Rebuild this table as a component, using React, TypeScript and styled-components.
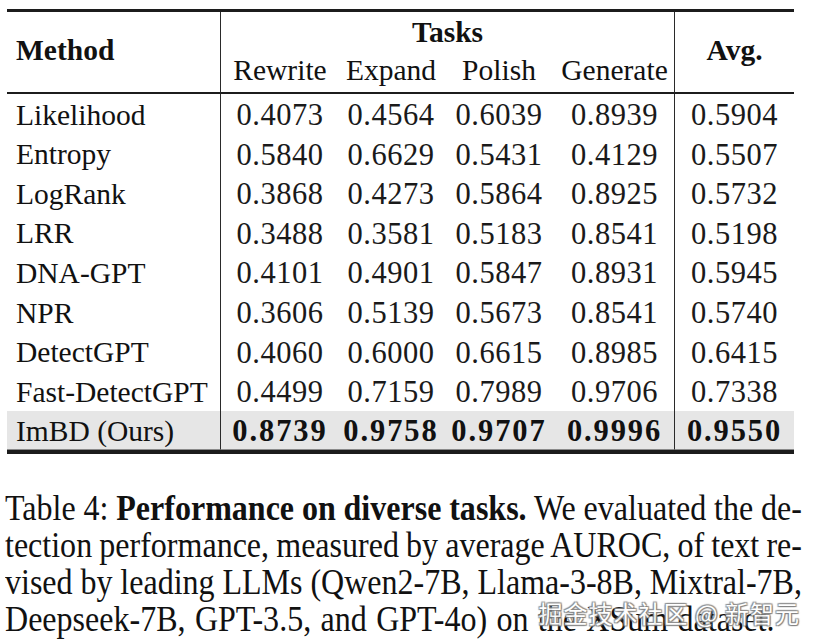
import * as React from "react"
import styled, { createGlobalStyle } from "styled-components"

const GlobalStyle = createGlobalStyle`
  html, body {
    margin: 0;
    padding: 0;
    background: #ffffff;
  }
  body {
    font-family: "Liberation Serif", "Times New Roman", serif;
    color: #111111;
  }
`

const Page = styled.div`
  width: 816px;
  height: 641px;
  overflow: hidden;
  padding: 9px 0 0 7px;
  box-sizing: border-box;
`

const Table = styled.table`
  width: 787px;
  table-layout: fixed;
  border-collapse: separate;
  border-spacing: 0;
  border-top: 3px solid #1c1c1c;
  border-bottom: 4px solid #1c1c1c;
  font-size: 29.5px;
`

const HeadRow = styled.tr`
  height: 41px;
`

const HeadCell = styled.th<{ $left?: boolean; $rule?: boolean; $bold?: boolean }>`
  padding: 0 0 0 ${(p) => (p.$left ? "9px" : "0")};
  text-align: ${(p) => (p.$left ? "left" : "center")};
  vertical-align: middle;
  font-weight: ${(p) => (p.$bold ? 700 : 400)};
  white-space: nowrap;
  border-right: ${(p) => (p.$rule ? "1.5px solid #2a2a2a" : "none")};
  line-height: 1;
`

const SubHead = styled(HeadCell)`
  border-bottom: 2px solid #1c1c1c;
  padding-bottom: 3px;
`

const SpanHead = styled(HeadCell)`
  border-bottom: 2px solid #1c1c1c;
  padding-bottom: 2px;
`

const BodyRow = styled.tr<{ $ours?: boolean }>`
  height: 39.6px;
  background: ${(p) => (p.$ours ? "#e6e6e6" : "transparent")};
`

const NameCell = styled.td<{ $last?: boolean }>`
  padding: 3px 0 0 9px;
  white-space: nowrap;
  border-right: 1.5px solid #2a2a2a;
  line-height: 1;
  border-bottom: ${(p) => (p.$last ? "1px solid #8a8a8a" : "none")};
`

const NumCell = styled.td<{ $bold?: boolean; $rule?: boolean; $last?: boolean }>`
  padding: 3px 0 0 0;
  text-align: center;
  white-space: nowrap;
  font-size: 30.5px;
  line-height: 1;
  font-weight: ${(p) => (p.$bold ? 700 : 400)};
  letter-spacing: ${(p) => (p.$bold ? "1.9px" : "0.5px")};
  color: ${(p) => (p.$bold ? "#111111" : "#1a1a1a")};
  border-right: ${(p) => (p.$rule ? "1.5px solid #2a2a2a" : "none")};
  border-bottom: ${(p) => (p.$last ? "1px solid #8a8a8a" : "none")};
`

const CaptionWrap = styled.div`
  position: relative;
  margin-top: 36px;
  width: 797px;
  margin-left: -2px;
`

const Caption = styled.div`
  width: 871px;
  transform: scaleX(0.915);
  transform-origin: left top;
  font-size: 35px;
  line-height: 37px;
`

const CaptionLine = styled.div<{ $justify?: boolean }>`
  white-space: nowrap;
  word-spacing: ${(p) => (p.$justify ? "-1.5px" : "1.5px")};
  text-align: ${(p) => (p.$justify ? "justify" : "left")};
  text-align-last: ${(p) => (p.$justify ? "justify" : "left")};
`

const Strong = styled.b`
  font-weight: 700;
`

const Watermark = styled.div`
  position: absolute;
  right: 2px;
  bottom: 8px;
  font-family: "Noto Sans CJK SC", "Noto Sans", sans-serif;
  font-size: 24px;
  letter-spacing: 1px;
  color: #ffffff;
  text-shadow: 0 0 1px #6f6f6f, 1px 1px 1px #7a7a7a, -1px -1px 1px #8a8a8a,
    1px -1px 1px #8a8a8a, -1px 1px 1px #8a8a8a;
  opacity: 0.92;
`

interface IRow {
  name: string
  values: string[]
  avg: string
}

const rows: IRow[] = [
  { name: "Likelihood", values: ["0.4073", "0.4564", "0.6039", "0.8939"], avg: "0.5904" },
  { name: "Entropy", values: ["0.5840", "0.6629", "0.5431", "0.4129"], avg: "0.5507" },
  { name: "LogRank", values: ["0.3868", "0.4273", "0.5864", "0.8925"], avg: "0.5732" },
  { name: "LRR", values: ["0.3488", "0.3581", "0.5183", "0.8541"], avg: "0.5198" },
  { name: "DNA-GPT", values: ["0.4101", "0.4901", "0.5847", "0.8931"], avg: "0.5945" },
  { name: "NPR", values: ["0.3606", "0.5139", "0.5673", "0.8541"], avg: "0.5740" },
  { name: "DetectGPT", values: ["0.4060", "0.6000", "0.6615", "0.8985"], avg: "0.6415" },
  { name: "Fast-DetectGPT", values: ["0.4499", "0.7159", "0.7989", "0.9706"], avg: "0.7338" },
]

const ours: IRow = {
  name: "ImBD (Ours)",
  values: ["0.8739", "0.9758", "0.9707", "0.9996"],
  avg: "0.9550",
}

const tasks = ["Rewrite", "Expand", "Polish", "Generate"]

const App = () => {
  return (
    <Page>
      <GlobalStyle />
      <Table>
        <colgroup>
          <col style={{ width: 214 }} />
          <col style={{ width: 118 }} />
          <col style={{ width: 104 }} />
          <col style={{ width: 112 }} />
          <col style={{ width: 120 }} />
          <col style={{ width: 119 }} />
        </colgroup>
        <thead>
          <HeadRow>
            <SpanHead rowSpan={2} $left $rule $bold>
              Method
            </SpanHead>
            <HeadCell colSpan={4} $rule $bold>
              Tasks
            </HeadCell>
            <SpanHead rowSpan={2} $bold>
              Avg.
            </SpanHead>
          </HeadRow>
          <HeadRow>
            {tasks.map((t, i) => (
              <SubHead key={t} $rule={i === tasks.length - 1}>
                {t}
              </SubHead>
            ))}
          </HeadRow>
        </thead>
        <tbody>
          {rows.map((r) => (
            <BodyRow key={r.name}>
              <NameCell>{r.name}</NameCell>
              {r.values.map((v, i) => (
                <NumCell key={i} $rule={i === 3}>
                  {v}
                </NumCell>
              ))}
              <NumCell>{r.avg}</NumCell>
            </BodyRow>
          ))}
          <BodyRow $ours>
            <NameCell $last>{ours.name}</NameCell>
            {ours.values.map((v, i) => (
              <NumCell key={i} $bold $last $rule={i === 3}>
                {v}
              </NumCell>
            ))}
            <NumCell $bold $last>
              {ours.avg}
            </NumCell>
          </BodyRow>
        </tbody>
      </Table>
      <CaptionWrap>
        <Caption>
          <CaptionLine $justify>
            Table 4: <Strong>Performance on diverse tasks.</Strong> We evaluated the de-
          </CaptionLine>
          <CaptionLine $justify>
            tection performance, measured by average AUROC, of text re-
          </CaptionLine>
          <CaptionLine $justify>
            vised by leading LLMs (Qwen2-7B, Llama-3-8B, Mixtral-7B,
          </CaptionLine>
          <CaptionLine>Deepseek-7B, GPT-3.5, and GPT-4o) on the XSum dataset.</CaptionLine>
        </Caption>
        <Watermark>掘金技术社区 @ 新智元</Watermark>
      </CaptionWrap>
    </Page>
  )
}

export default App
